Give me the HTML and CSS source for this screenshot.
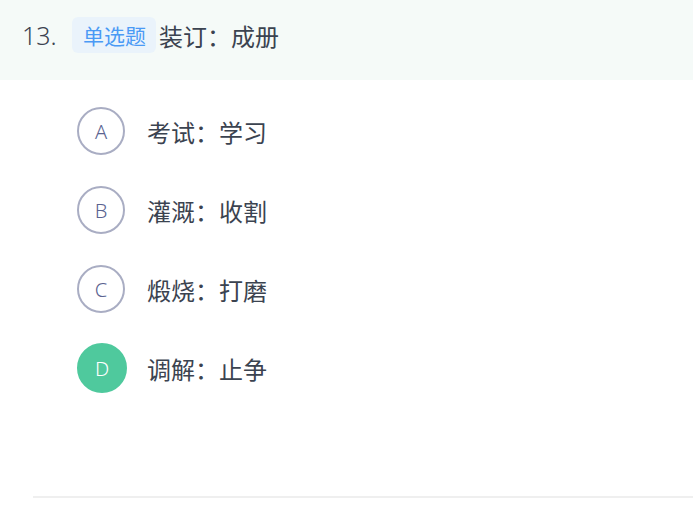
FILE: index.html
```html
<!DOCTYPE html>
<html lang="zh-CN">
<head>
    <meta charset="UTF-8">
    <title>单选题</title>
    <link rel="stylesheet" href="styles.css">
</head>
<body>
    <div class="question">
        <div class="question-title">
            <span class="num">13.</span>
            <span class="tag">单选题</span>
            <span class="stem">装订：成册</span>
        </div>
        <ul class="options">
            <li class="option"><span class="letter">A</span><span class="text">考试：学习</span></li>
            <li class="option"><span class="letter">B</span><span class="text">灌溉：收割</span></li>
            <li class="option"><span class="letter">C</span><span class="text">煅烧：打磨</span></li>
            <li class="option active"><span class="letter">D</span><span class="text">调解：止争</span></li>
        </ul>
        <div class="divider"></div>
    </div>
</body>
</html>
```

FILE: styles.css
```css
body {
    margin: 0;
    background-color: #fff;
    font-family: "Noto Sans CJK SC", "Noto Sans", sans-serif;
    color: #3b4350;
}
.question-title {
    height: 80px;
    background-color: #f5faf8;
    display: flex;
    align-items: center;
    padding-left: 22px;
    padding-bottom: 10px;
    box-sizing: border-box;
    font-size: 24px;
}
.num {
    font-family: "Noto Sans", sans-serif;
    font-size: 25px;
    font-weight: 300;
    width: 50px;
}
.tag {
    background-color: #eaf3fb;
    color: #4a9af5;
    font-size: 21px;
    height: 36px;
    line-height: 36px;
    padding: 0 10px 0 11px;
    border-radius: 6px;
    margin-right: 3px;
}
.options {
    list-style: none;
    margin: 0;
    padding: 27px 0 0 77px;
}
.option {
    display: flex;
    align-items: center;
    height: 48px;
    margin-bottom: 31px;
}
.letter {
    width: 48px;
    height: 48px;
    box-sizing: border-box;
    border: 2px solid #a9adc3;
    border-radius: 50%;
    display: flex;
    align-items: center;
    justify-content: center;
    font-family: "Noto Sans", sans-serif;
    font-size: 20px;
    font-weight: 300;
    color: #5a6390;
    margin-right: 22px;
}
.option.active .letter {
    background-color: #4fc99d;
    border-color: #4fc99d;
    color: #fff;
    width: 50px;
    height: 50px;
    margin-right: 20px;
}
.text {
    font-size: 24px;
}
.divider {
    margin-left: 33px;
    margin-top: 104px;
    height: 2px;
    background-color: #efefef;
}
```
